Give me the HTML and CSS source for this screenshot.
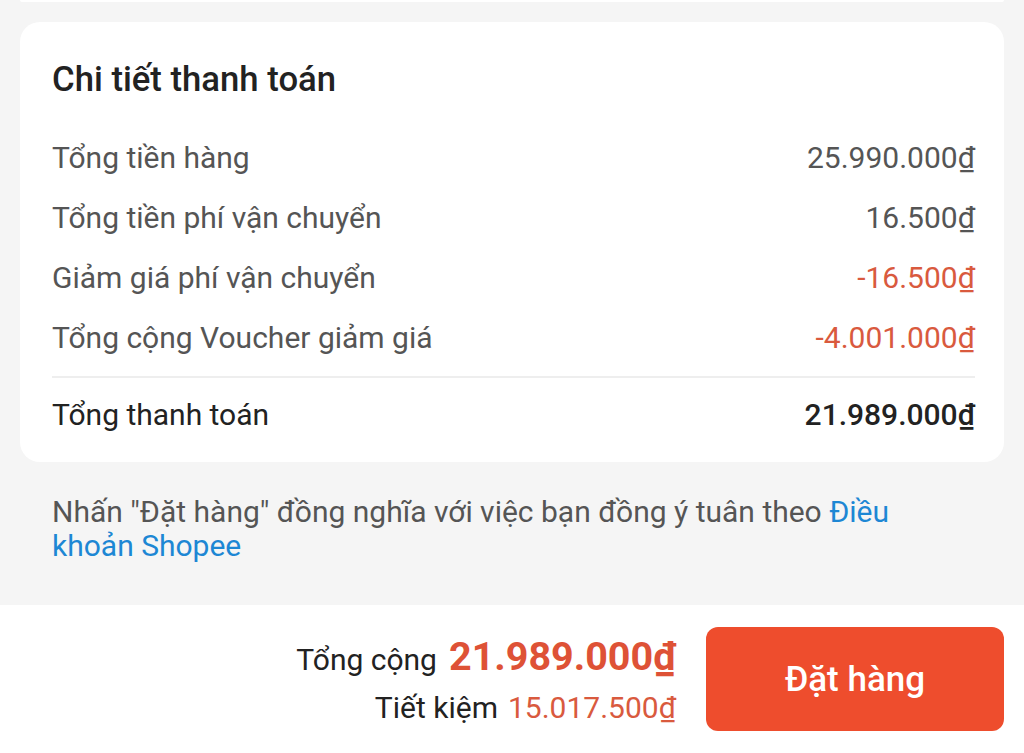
FILE: index.html
```html
<!DOCTYPE html>
<html lang="vi">
<head>
<meta charset="utf-8">
<title>Chi tiết thanh toán</title>
<link rel="stylesheet" href="styles.css">
</head>
<body>
<div class="page">
  <div class="prev-card"></div>
  <section class="card">
    <h2 class="card-title">Chi tiết thanh toán</h2>
    <div class="row"><span>Tổng tiền hàng</span><span class="val">25.990.000₫</span></div>
    <div class="row"><span>Tổng tiền phí vận chuyển</span><span class="val">16.500₫</span></div>
    <div class="row"><span>Giảm giá phí vận chuyển</span><span class="val neg">-16.500₫</span></div>
    <div class="row"><span>Tổng cộng Voucher giảm giá</span><span class="val neg">-4.001.000₫</span></div>
    <div class="divider"></div>
    <div class="row total"><span>Tổng thanh toán</span><span class="val">21.989.000₫</span></div>
  </section>
  <p class="terms">Nhấn "Đặt hàng" đồng nghĩa với việc bạn đồng ý tuân theo <a class="link" href="#">Điều khoản Shopee</a></p>
</div>
<footer class="bar">
  <div class="sum">
    <div class="sum-line"><span class="sum-label">Tổng cộng</span><span class="sum-amount">21.989.000₫</span></div>
    <div class="save-line"><span class="sum-label">Tiết kiệm</span><span class="save-amount">15.017.500₫</span></div>
  </div>
  <button class="order-btn">Đặt hàng</button>
</footer>
</body>
</html>
```

FILE: styles.css
```css
* { box-sizing: border-box; }
html, body {
  margin: 0;
  padding: 0;
}
body {
  width: 1024px;
  height: 753px;
  overflow: hidden;
  background: #f5f5f5;
  font-family: Roboto, "Noto Sans", "Liberation Sans", sans-serif;
  display: flex;
  flex-direction: column;
}
.page {
  flex: 1;
  display: flex;
  flex-direction: column;
}
.prev-card {
  height: 2px;
  margin: 0 20px;
  background: #fff;
  border-radius: 0 0 2px 2px;
}
.card {
  margin: 20px 20px 0;
  background: #fff;
  border-radius: 20px;
  padding: 37px 29px 18px 32px;
}
.card-title {
  margin: 0 0 28px;
  font-size: 34.7px;
  line-height: 40px;
  font-weight: 500;
  color: #222;
}
.row {
  display: flex;
  justify-content: space-between;
  align-items: center;
  height: 60px;
  font-size: 30px;
  color: #555;
}
.val.neg { color: #d95a3e; }
.divider {
  height: 2px;
  background: #eee;
  margin: 9px 0 6px;
}
.row.total { color: #222; }
.row.total .val { font-weight: 500; }
.terms {
  margin: 33px 0 0;
  padding: 0 50px 0 52px;
  font-size: 30px;
  line-height: 34px;
  color: #555;
}
.link {
  color: #1d87d4;
  text-decoration: none;
}
.bar {
  height: 148px;
  background: #fff;
  display: flex;
  align-items: center;
  justify-content: flex-end;
  padding: 0 20px 0 0;
  gap: 30px;
}
.sum {
  display: flex;
  flex-direction: column;
  align-items: flex-end;
  padding-top: 6px;
  color: #222;
}
.sum-line {
  display: flex;
  align-items: baseline;
  gap: 12px;
  line-height: 48px;
}
.save-line {
  display: flex;
  align-items: baseline;
  gap: 10px;
  line-height: 48px;
}
.sum-label { font-size: 30px; }
.sum-amount {
  font-size: 39.5px;
  font-weight: 700;
  color: #de5236;
}
.save-amount {
  font-size: 30px;
  color: #d95a3e;
}
.order-btn {
  width: 298px;
  height: 104px;
  border: none;
  border-radius: 12px;
  background: #ee4d2d;
  color: #fff;
  font-family: inherit;
  font-size: 35px;
  font-weight: 500;
}
```
